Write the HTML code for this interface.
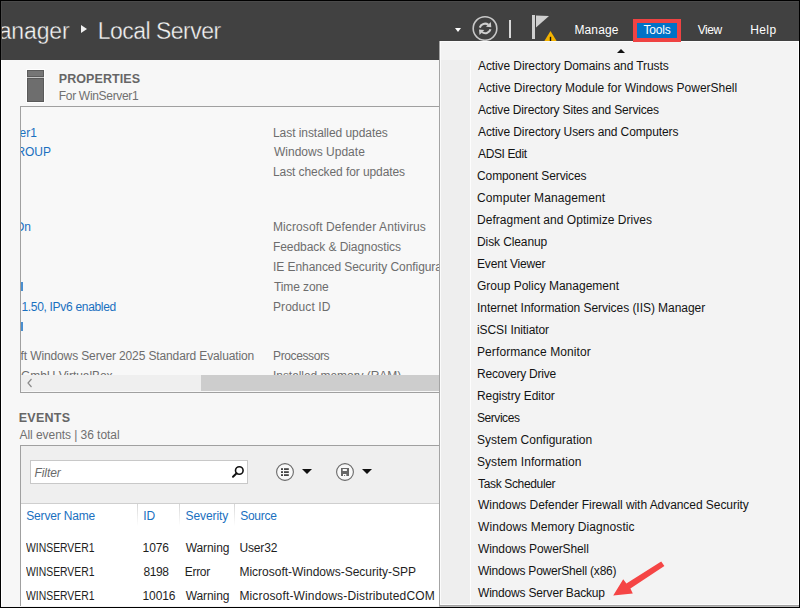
<!DOCTYPE html>
<html><head><meta charset="utf-8">
<style>
*{margin:0;padding:0;box-sizing:border-box}
html,body{width:800px;height:608px;overflow:hidden}
body{position:relative;background:#f7f7f7;font-family:"Liberation Sans",sans-serif;font-size:12px;color:#222}
.t{position:absolute;white-space:nowrap}
.s{position:absolute}
</style></head><body>

<div class="s" style="left:0;top:0;width:800px;height:60px;background:#414141"></div>
<div class="s" style="left:81px;top:25px;width:0;height:0;border-top:4px solid transparent;border-bottom:4px solid transparent;border-left:6px solid #f0f0f0"></div>
<div class="s" style="left:455px;top:28px;width:0;height:0;border-left:3.5px solid transparent;border-right:3.5px solid transparent;border-top:4px solid #fff"></div>
<svg class="s" style="left:472px;top:15px" width="26" height="26" viewBox="0 0 26 26">
  <circle cx="13" cy="13.5" r="11.8" fill="none" stroke="#c8c8c8" stroke-width="1.6"/>
  <path d="M7.8 12.6 A5.4 5.4 0 0 1 16.4 9.9" fill="none" stroke="#cfcfcf" stroke-width="2.1"/>
  <path d="M18.8 7 L19.3 12.3 L14 11.8 Z" fill="#cfcfcf"/>
  <path d="M18.5 14.3 A5.4 5.4 0 0 1 9.9 17" fill="none" stroke="#cfcfcf" stroke-width="2.1"/>
  <path d="M7.5 19.9 L7 14.6 L12.3 15.1 Z" fill="#cfcfcf"/>
</svg>
<div class="s" style="left:509px;top:20px;width:2px;height:18px;background:#d8d8d8"></div>
<svg class="s" style="left:530px;top:13px" width="30" height="30" viewBox="0 0 30 30">
  <rect x="2" y="2" width="3" height="24" fill="#cfcfcf"/>
  <path d="M6 2.5 L19 3 L6 14.5 Z" fill="#cfcfcf"/>
  <path d="M20.5 18 L26.6 28 L14.4 28 Z" fill="#f5b400"/>
  <rect x="19.8" y="23.8" width="1.4" height="4.2" fill="#111"/>
</svg>
<!-- properties -->
<div class="s" style="left:26px;top:69px;width:19px;height:34px;background:#fff"></div>
<div class="s" style="left:27px;top:70px;width:17px;height:7px;background:#767676;border:1px solid #5c5c5c"></div>
<div class="s" style="left:27px;top:77px;width:17px;height:1px;background:#c4c4c4"></div>
<div class="s" style="left:27px;top:78px;width:17px;height:24px;background:#6e6e6e;border:1px solid #5a5a5a"></div>
<div class="s" style="left:20px;top:106px;width:430px;height:287px;border:1px solid #a0a0a0;background:#f8f8f8"></div>

<div class="t" style="left:-20.40px;top:20px;font-size:23px;line-height:23px;letter-spacing:-0.119px;color:#f4f4f4;-webkit-text-stroke:0.35px #414141">Manager</div>
<div class="t" style="left:97.75px;top:20px;font-size:23px;line-height:23px;letter-spacing:-0.523px;color:#f4f4f4;-webkit-text-stroke:0.35px #414141">Local Server</div>
<div class="t" style="left:574.50px;top:24px;font-size:12px;line-height:12px;letter-spacing:0.1px;color:#ffffff">Manage</div>
<div class="t" style="left:697.70px;top:24px;font-size:12px;line-height:12px;letter-spacing:-0.4px;color:#ffffff">View</div>
<div class="t" style="left:750.30px;top:24px;font-size:12px;line-height:12px;letter-spacing:0.367px;color:#ffffff">Help</div>
<div style="position:absolute;left:21px;top:107px;width:418px;height:268px;overflow:hidden">
<div class="t" style="left:-46.30px;top:20px;font-size:12px;line-height:12px;letter-spacing:-0.062px;color:#1a70c0">WinServer1</div>
<div class="t" style="left:-50.90px;top:39px;font-size:12px;line-height:12px;letter-spacing:-0.062px;color:#1a70c0">WORKGROUP</div>
<div class="t" style="left:-118.60px;top:114px;font-size:12px;line-height:12px;letter-spacing:-0.062px;color:#1a70c0">Real-time protection: On</div>
<div class="t" style="left:0.40px;top:194px;font-size:12px;line-height:12px;letter-spacing:-0.306px;color:#1a70c0">1.50, IPv6 enabled</div>
<div class="t" style="left:-0.40px;top:243px;font-size:12px;line-height:12px;letter-spacing:-0.127px;color:#6d6d6d">ft Windows Server 2025 Standard Evaluation</div>
<div class="t" style="left:-41.60px;top:263px;font-size:12px;line-height:12px;letter-spacing:-0.062px;color:#6d6d6d">innotek GmbH VirtualBox</div>
<div class="t" style="left:252.00px;top:20px;font-size:12px;line-height:12px;letter-spacing:-0.062px;color:#6d6d6d">Last installed updates</div>
<div class="t" style="left:253.00px;top:39px;font-size:12px;line-height:12px;letter-spacing:0.008px;color:#6d6d6d">Windows Update</div>
<div class="t" style="left:252.00px;top:59px;font-size:12px;line-height:12px;letter-spacing:-0.087px;color:#6d6d6d">Last checked for updates</div>
<div class="t" style="left:252.00px;top:114px;font-size:12px;line-height:12px;letter-spacing:0.104px;color:#6d6d6d">Microsoft Defender Antivirus</div>
<div class="t" style="left:252.00px;top:134px;font-size:12px;line-height:12px;letter-spacing:-0.067px;color:#6d6d6d">Feedback &amp; Diagnostics</div>
<div class="t" style="left:252.00px;top:154px;font-size:12px;line-height:12px;letter-spacing:-0.062px;color:#6d6d6d">IE Enhanced Security Configuration</div>
<div class="t" style="left:253.00px;top:174px;font-size:12px;line-height:12px;letter-spacing:-0.1px;color:#6d6d6d">Time zone</div>
<div class="t" style="left:252.00px;top:194px;font-size:12px;line-height:12px;letter-spacing:0.067px;color:#6d6d6d">Product ID</div>
<div class="t" style="left:252.00px;top:243px;font-size:12px;line-height:12px;letter-spacing:-0.378px;color:#6d6d6d">Processors</div>
<div class="t" style="left:252.00px;top:263px;font-size:12px;line-height:12px;letter-spacing:-0.052px;color:#6d6d6d">Installed memory (RAM)</div>
<div class="t" style="left:457.00px;top:19px;font-size:12px;line-height:12px;letter-spacing:-0.103px;color:#141414">Active Directory Users and Computers</div>
<div class="t" style="left:457.00px;top:41px;font-size:12px;line-height:12px;letter-spacing:-0.375px;color:#141414">ADSI Edit</div>
<div class="t" style="left:456.00px;top:63px;font-size:12px;line-height:12px;letter-spacing:-0.106px;color:#141414">Component Services</div>
<div class="t" style="left:456.00px;top:85px;font-size:12px;line-height:12px;letter-spacing:0.111px;color:#141414">Computer Management</div>
<div class="t" style="left:456.00px;top:107px;font-size:12px;line-height:12px;letter-spacing:0.031px;color:#141414">Defragment and Optimize Drives</div>
<div class="t" style="left:456.00px;top:129px;font-size:12px;line-height:12px;letter-spacing:-0.1px;color:#141414">Disk Cleanup</div>
<div class="t" style="left:456.00px;top:151px;font-size:12px;line-height:12px;letter-spacing:-0.173px;color:#141414">Event Viewer</div>
<div class="t" style="left:456.00px;top:173px;font-size:12px;line-height:12px;letter-spacing:-0.005px;color:#141414">Group Policy Management</div>
<div class="t" style="left:456.00px;top:195px;font-size:12px;line-height:12px;letter-spacing:-0.045px;color:#141414">Internet Information Services (IIS) Manager</div>
<div class="t" style="left:456.00px;top:217px;font-size:12px;line-height:12px;letter-spacing:-0.093px;color:#141414">iSCSI Initiator</div>
<div class="t" style="left:456.00px;top:239px;font-size:12px;line-height:12px;letter-spacing:0.094px;color:#141414">Performance Monitor</div>
<div class="t" style="left:456.00px;top:261px;font-size:12px;line-height:12px;letter-spacing:-0.215px;color:#141414">Recovery Drive</div>
<div class="s" style="left:0px;top:175px;width:2px;height:9px;background:#4a8fd0"></div>
<div class="s" style="left:0px;top:215px;width:2px;height:9px;background:#4a8fd0"></div>
</div>
<!-- scrollbar -->
<div class="s" style="left:21px;top:375px;width:420px;height:16px;background:#efefef"></div>
<div class="s" style="left:201px;top:375px;width:240px;height:16px;background:#cdcdcd"></div>
<svg class="s" style="left:26px;top:378px" width="8" height="10"><path d="M5.5 1 L2 5 L5.5 9" fill="none" stroke="#8a8a8a" stroke-width="1.2"/></svg>
<!-- events -->
<div class="s" style="left:20px;top:445px;width:430px;height:170px;border:1px solid #a0a0a0;background:#fff"></div>
<div class="s" style="left:21px;top:446px;width:420px;height:58px;background:#efefef;border-bottom:1px solid #cfcfcf"></div>
<div class="s" style="left:30px;top:460px;width:218px;height:24px;background:#fff;border:1px solid #c8c8c8"></div>
<svg class="s" style="left:229px;top:463px" width="16" height="16"><circle cx="10.3" cy="7.5" r="3.8" fill="none" stroke="#111" stroke-width="1.6"/><path d="M7.6 10.2 L4 13.8" stroke="#111" stroke-width="2" stroke-linecap="round"/></svg>
<svg class="s" style="left:275px;top:462px" width="20" height="20"><circle cx="10" cy="10" r="8.4" fill="#f8f8f8" stroke="#6a6a6a" stroke-width="1.1"/><rect x="6" y="6.2" width="2" height="1.8" fill="#444"/><rect x="9" y="6.2" width="4.8" height="1.8" fill="#444"/><rect x="6" y="9.2" width="2" height="1.8" fill="#444"/><rect x="9" y="9.2" width="4.8" height="1.8" fill="#444"/><rect x="6" y="12.2" width="2" height="1.8" fill="#444"/><rect x="9" y="12.2" width="4.8" height="1.8" fill="#444"/></svg>
<div class="s" style="left:302px;top:469px;width:0;height:0;border-left:5px solid transparent;border-right:5px solid transparent;border-top:5px solid #111"></div>
<svg class="s" style="left:335px;top:462px" width="20" height="20"><circle cx="10" cy="10" r="8.4" fill="#f8f8f8" stroke="#6a6a6a" stroke-width="1.1"/><rect x="6" y="6" width="8" height="8" fill="#666"/><rect x="7.7" y="7" width="4.2" height="2" fill="#f8f8f8"/><rect x="8" y="12" width="3.3" height="2" fill="#f8f8f8"/><rect x="9.1" y="13" width="1" height="1" fill="#666"/></svg>
<div class="s" style="left:362px;top:469px;width:0;height:0;border-left:5px solid transparent;border-right:5px solid transparent;border-top:5px solid #111"></div>
<div class="s" style="left:137px;top:504px;width:1px;height:22px;background:linear-gradient(#d6d6d6,#fff)"></div>
<div class="s" style="left:179px;top:504px;width:1px;height:22px;background:linear-gradient(#d6d6d6,#fff)"></div>
<div class="s" style="left:234px;top:504px;width:1px;height:22px;background:linear-gradient(#d6d6d6,#fff)"></div>

<div class="t" style="left:58.80px;top:73px;font-size:12.5px;line-height:12.5px;font-weight:bold;letter-spacing:0.078px;color:#666666">PROPERTIES</div>
<div class="t" style="left:58.80px;top:90px;font-size:12px;line-height:12px;letter-spacing:-0.315px;color:#707070">For WinServer1</div>
<div class="t" style="left:18.70px;top:412px;font-size:12.5px;line-height:12.5px;font-weight:bold;letter-spacing:0.26px;color:#666666">EVENTS</div>
<div class="t" style="left:19.50px;top:429px;font-size:12px;line-height:12px;letter-spacing:-0.055px;color:#707070">All events | 36 total</div>
<div class="t" style="left:34.50px;top:467px;font-size:12px;line-height:12px;font-style:italic;letter-spacing:-0.062px;color:#6a6a6a">Filter</div>
<div class="t" style="left:26.30px;top:510px;font-size:12px;line-height:12px;letter-spacing:-0.18px;color:#1a70c0">Server Name</div>
<div class="t" style="left:143.30px;top:510px;font-size:12px;line-height:12px;letter-spacing:-0.1px;color:#1a70c0">ID</div>
<div class="t" style="left:185.60px;top:510px;font-size:12px;line-height:12px;letter-spacing:-0.086px;color:#1a70c0">Severity</div>
<div class="t" style="left:240.20px;top:510px;font-size:12px;line-height:12px;letter-spacing:-0.28px;color:#1a70c0">Source</div>
<div class="t" style="left:26.30px;top:542px;font-size:12px;line-height:12px;letter-spacing:0.0px;transform:scaleX(0.8658);transform-origin:0 0;color:#1e1e1e">WINSERVER1</div>
<div class="t" style="left:142.60px;top:542px;font-size:12px;line-height:12px;letter-spacing:-0.1px;color:#1e1e1e">1076</div>
<div class="t" style="left:185.70px;top:542px;font-size:12px;line-height:12px;letter-spacing:-0.083px;color:#1e1e1e">Warning</div>
<div class="t" style="left:239.40px;top:542px;font-size:12px;line-height:12px;letter-spacing:-0.14px;color:#1e1e1e">User32</div>
<div class="t" style="left:26.30px;top:566px;font-size:12px;line-height:12px;letter-spacing:0.0px;transform:scaleX(0.8658);transform-origin:0 0;color:#1e1e1e">WINSERVER1</div>
<div class="t" style="left:143.60px;top:566px;font-size:12px;line-height:12px;letter-spacing:-0.433px;color:#1e1e1e">8198</div>
<div class="t" style="left:184.70px;top:566px;font-size:12px;line-height:12px;letter-spacing:-0.275px;color:#1e1e1e">Error</div>
<div class="t" style="left:239.40px;top:566px;font-size:12px;line-height:12px;letter-spacing:-0.003px;color:#1e1e1e">Microsoft-Windows-Security-SPP</div>
<div class="t" style="left:26.30px;top:590px;font-size:12px;line-height:12px;letter-spacing:0.0px;transform:scaleX(0.8658);transform-origin:0 0;color:#1e1e1e">WINSERVER1</div>
<div class="t" style="left:142.60px;top:590px;font-size:12px;line-height:12px;letter-spacing:-0.15px;color:#1e1e1e">10016</div>
<div class="t" style="left:185.70px;top:590px;font-size:12px;line-height:12px;letter-spacing:-0.083px;color:#1e1e1e">Warning</div>
<div class="t" style="left:239.40px;top:590px;font-size:12px;line-height:12px;letter-spacing:0.148px;color:#1e1e1e">Microsoft-Windows-DistributedCOM</div>
<div class="s" style="left:439px;top:41px;width:361px;height:565px;background:#f3f3f3;border-left:1px solid #a4a4a4;border-bottom:1px solid #a0a0a0"></div>
<div class="s" style="left:440px;top:41px;width:359px;height:1px;background:#fbfbfb"></div>
<div class="s" style="left:440px;top:42px;width:1px;height:563px;background:#fbfbfb"></div>
<div class="s" style="left:440px;top:604px;width:359px;height:1px;background:#fbfbfb"></div>
<div class="s" style="left:441px;top:60px;width:30px;height:544px;background:#eeeeee;border-right:1px solid #fdfdfd"></div>
<div class="s" style="left:616.5px;top:48.5px;width:0;height:0;border-left:4px solid transparent;border-right:4px solid transparent;border-bottom:4.5px solid #111"></div>

<div class="t" style="left:478.00px;top:60px;font-size:12px;line-height:12px;letter-spacing:-0.1px;color:#141414">Active Directory Domains and Trusts</div>
<div class="t" style="left:478.00px;top:82px;font-size:12px;line-height:12px;letter-spacing:-0.022px;color:#141414">Active Directory Module for Windows PowerShell</div>
<div class="t" style="left:478.00px;top:104px;font-size:12px;line-height:12px;letter-spacing:-0.165px;color:#141414">Active Directory Sites and Services</div>
<div class="t" style="left:478.00px;top:126px;font-size:12px;line-height:12px;letter-spacing:-0.103px;color:#141414">Active Directory Users and Computers</div>
<div class="t" style="left:478.00px;top:148px;font-size:12px;line-height:12px;letter-spacing:-0.375px;color:#141414">ADSI Edit</div>
<div class="t" style="left:477.00px;top:170px;font-size:12px;line-height:12px;letter-spacing:-0.106px;color:#141414">Component Services</div>
<div class="t" style="left:477.00px;top:192px;font-size:12px;line-height:12px;letter-spacing:0.111px;color:#141414">Computer Management</div>
<div class="t" style="left:477.00px;top:214px;font-size:12px;line-height:12px;letter-spacing:0.031px;color:#141414">Defragment and Optimize Drives</div>
<div class="t" style="left:477.00px;top:236px;font-size:12px;line-height:12px;letter-spacing:-0.1px;color:#141414">Disk Cleanup</div>
<div class="t" style="left:477.00px;top:258px;font-size:12px;line-height:12px;letter-spacing:-0.173px;color:#141414">Event Viewer</div>
<div class="t" style="left:477.00px;top:280px;font-size:12px;line-height:12px;letter-spacing:-0.005px;color:#141414">Group Policy Management</div>
<div class="t" style="left:477.00px;top:302px;font-size:12px;line-height:12px;letter-spacing:-0.045px;color:#141414">Internet Information Services (IIS) Manager</div>
<div class="t" style="left:477.00px;top:324px;font-size:12px;line-height:12px;letter-spacing:-0.093px;color:#141414">iSCSI Initiator</div>
<div class="t" style="left:477.00px;top:346px;font-size:12px;line-height:12px;letter-spacing:0.094px;color:#141414">Performance Monitor</div>
<div class="t" style="left:477.00px;top:368px;font-size:12px;line-height:12px;letter-spacing:-0.215px;color:#141414">Recovery Drive</div>
<div class="t" style="left:477.00px;top:390px;font-size:12px;line-height:12px;letter-spacing:-0.064px;color:#141414">Registry Editor</div>
<div class="t" style="left:477.00px;top:412px;font-size:12px;line-height:12px;letter-spacing:-0.443px;color:#141414">Services</div>
<div class="t" style="left:477.00px;top:434px;font-size:12px;line-height:12px;letter-spacing:0.026px;color:#141414">System Configuration</div>
<div class="t" style="left:477.00px;top:456px;font-size:12px;line-height:12px;letter-spacing:0.059px;color:#141414">System Information</div>
<div class="t" style="left:478.00px;top:478px;font-size:12px;line-height:12px;letter-spacing:-0.346px;color:#141414">Task Scheduler</div>
<div class="t" style="left:478.00px;top:499px;font-size:12px;line-height:12px;letter-spacing:-0.057px;color:#141414">Windows Defender Firewall with Advanced Security</div>
<div class="t" style="left:478.00px;top:521px;font-size:12px;line-height:12px;letter-spacing:0.079px;color:#141414">Windows Memory Diagnostic</div>
<div class="t" style="left:478.00px;top:543px;font-size:12px;line-height:12px;letter-spacing:-0.112px;color:#141414">Windows PowerShell</div>
<div class="t" style="left:478.00px;top:565px;font-size:12px;line-height:12px;letter-spacing:-0.209px;color:#141414">Windows PowerShell (x86)</div>
<div class="t" style="left:478.00px;top:587px;font-size:12px;line-height:12px;letter-spacing:-0.19px;color:#141414">Windows Server Backup</div>
<div class="s" style="left:633px;top:19px;width:48px;height:23px;border:4px solid #ef4343;background:#0072c6"></div>
<div class="t" style="left:643.60px;top:24px;font-size:12px;line-height:12px;letter-spacing:-0.225px;color:#ffffff">Tools</div>
<svg class="s" style="left:600px;top:550px" width="80" height="55">
  <path d="M61.2 11.6 L64.4 16 L30.4 38.4 L32.8 43.6 L13.2 45.6 L23.2 29.2 L26.4 33.6 Z" fill="#f54545"/>
</svg>
<div class="s" style="left:1px;top:1px;width:798px;height:1px;background:#4a4a4a"></div>
<div class="s" style="left:1px;top:1px;width:1px;height:59px;background:#4a4a4a"></div>
<div class="s" style="left:1px;top:60px;width:1px;height:547px;background:#fff"></div>
<div class="s" style="left:798px;top:41px;width:1px;height:564px;background:#fff"></div>
<div class="s" style="left:439px;top:606px;width:360px;height:1px;background:#b8b8b8"></div>
<div class="s" style="left:1px;top:606px;width:438px;height:1px;background:#f4f4f4"></div>
<div class="s" style="left:0;top:0;width:800px;height:608px;border:1px solid #000"></div>
</body></html>
